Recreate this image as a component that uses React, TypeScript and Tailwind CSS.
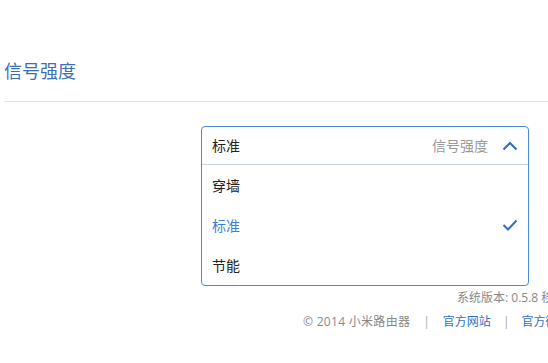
import React from "react";

export default function App() {
  const font = { fontFamily: '"Noto Sans CJK SC", "Noto Sans", sans-serif' };
  const foot = { fontFamily: '"Open Sans", "Noto Sans CJK SC", sans-serif' };
  return (
    <div className="w-[548px] h-[363px] overflow-hidden bg-white" style={font}>
      <div className="pt-[58px] pl-[4px] text-[18px] leading-[24px] text-[#3b6fb5]">信号强度</div>
      <div className="mt-[19px] ml-[4px] h-px w-[600px] bg-[#e2e2e2]" />
      <div className="ml-[201px] mt-[24px] w-[328px] rounded-[4px] border border-[#4a8ad8] bg-white">
        <div className="flex h-[38px] items-center border-b border-[#c9d3de] pl-[10px] pr-[10px]">
          <span className="text-[14px] text-[#222]">标准</span>
          <span className="ml-auto text-[14px] text-[#999]">信号强度</span>
          <svg className="ml-[14px]" width="16" height="10" viewBox="0 0 16 10">
            <path d="M1.5 8.5 L8 2 L14.5 8.5" fill="none" stroke="#2f6fbf" strokeWidth="2" />
          </svg>
        </div>
        <div className="flex h-[40px] items-center pl-[10px] text-[14px] text-[#222]">穿墙</div>
        <div className="flex h-[40px] items-center pl-[10px] pr-[10px] text-[14px] text-[#3b7fd9]">
          <span>标准</span>
          <svg className="ml-auto" width="16" height="12" viewBox="0 0 16 12">
            <path d="M1.5 6 L6 10.5 L14.5 1.5" fill="none" stroke="#2f6fbf" strokeWidth="2" />
          </svg>
        </div>
        <div className="flex h-[40px] items-center pl-[10px] text-[14px] text-[#222]">节能</div>
      </div>
      <div style={foot}>
        <div className="ml-[457px] mt-[3px] whitespace-nowrap text-[12px] leading-[18px] text-[#888]">系统版本: 0.5.8 移动版</div>
        <div className="ml-[303px] mt-[6px] flex whitespace-nowrap text-[12px] leading-[18px]">
          <span className="text-[#888] tracking-[0.3px]">© 2014 小米路由器</span>
          <span className="ml-[13px] mr-[13px] text-[#aaa]">|</span>
          <span className="text-[#2f6fbf]">官方网站</span>
          <span className="ml-[12px] mr-[12px] text-[#aaa]">|</span>
          <span className="text-[#2f6fbf]">官方微博</span>
        </div>
      </div>
    </div>
  );
}
